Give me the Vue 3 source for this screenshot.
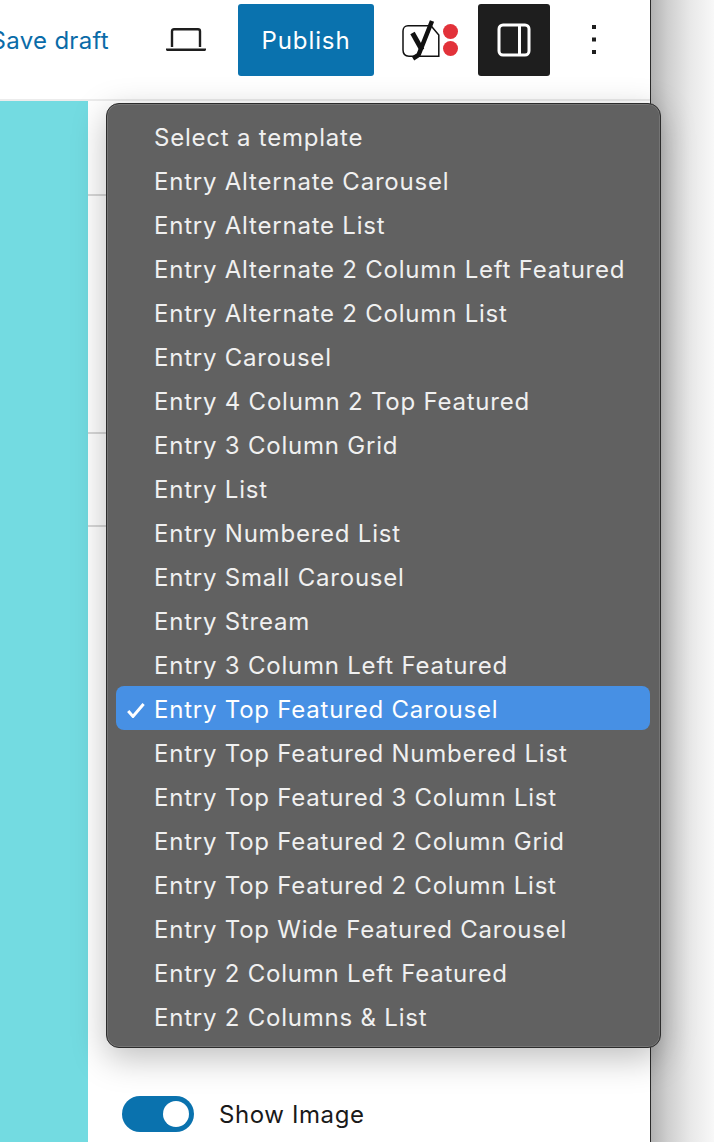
<template>
  <div class="page">
    <div class="window">
      <header class="toolbar">
        <a class="save-draft">Save draft</a>
        <button class="icon-btn preview" aria-label="Preview">
          <svg width="40" height="24" viewBox="0 0 40 24">
            <path d="M6 19V3.2C6 2 7 1.2 8 1.2H32C33 1.2 34 2 34 3.2V19" fill="none" stroke="#1e1e1e" stroke-width="2.4" />
            <path d="M0 20.5H40V21.5C40 22.5 39 23 38 23H2C1 23 0 22.5 0 21.5Z" fill="#1e1e1e" />
          </svg>
        </button>
        <button class="publish">Publish</button>
        <div class="yoast">
          <svg width="38" height="42" viewBox="0 0 38 42">
            <path d="M6 6.8H29L36.8 16V37.2H7C3 37.2 1 35 1 31V12C1 9 3 6.8 6 6.8Z" fill="#fff" stroke="#111" stroke-width="1.5" />
            <path d="M10.5 14L20 31" fill="none" stroke="#111" stroke-width="5" />
            <path d="M30 2L16.5 36L11 39.5" fill="none" stroke="#111" stroke-width="4.5" />
          </svg>
          <div class="dots">
            <span class="red-dot"></span>
            <span class="red-dot"></span>
          </div>
        </div>
        <button class="settings" aria-label="Settings">
          <svg width="34" height="34" viewBox="0 0 34 34">
            <rect x="2" y="2" width="30" height="30" rx="4" fill="none" stroke="#fff" stroke-width="3" />
            <rect x="21" y="3" width="3" height="28" fill="#fff" />
          </svg>
        </button>
        <button class="more" aria-label="Options">
          <svg width="4" height="30" viewBox="0 0 4 30">
            <rect x="0" y="0" width="4" height="4" fill="#1e1e1e" />
            <rect x="0" y="12.5" width="4" height="4" fill="#1e1e1e" />
            <rect x="0" y="25" width="4" height="4" fill="#1e1e1e" />
          </svg>
        </button>
      </header>

      <div class="content">
        <div class="canvas"></div>
        <aside class="sidebar">
          <div class="section first"></div>
          <div class="section second"></div>
          <div class="section third"></div>
          <div class="spacer"></div>
          <label class="toggle-row">
            <span class="toggle"><span class="knob"></span></span>
            <span class="toggle-label">Show Image</span>
          </label>
        </aside>
      </div>
    </div>

    <ul class="menu">
      <li
        v-for="item in templates"
        :key="item"
        class="menu-item"
        :class="{ selected: item === selected }"
      >
        <svg v-if="item === selected" class="check" width="18" height="15" viewBox="0 0 18 15">
          <path d="M1.2 8L6 13.4L16.6 1" fill="none" stroke="#fff" stroke-width="3" />
        </svg>
        {{ item }}
      </li>
    </ul>
  </div>
</template>

<script setup>
const selected = 'Entry Top Featured Carousel'

const templates = [
  'Select a template',
  'Entry Alternate Carousel',
  'Entry Alternate List',
  'Entry Alternate 2 Column Left Featured',
  'Entry Alternate 2 Column List',
  'Entry Carousel',
  'Entry 4 Column 2 Top Featured',
  'Entry 3 Column Grid',
  'Entry List',
  'Entry Numbered List',
  'Entry Small Carousel',
  'Entry Stream',
  'Entry 3 Column Left Featured',
  'Entry Top Featured Carousel',
  'Entry Top Featured Numbered List',
  'Entry Top Featured 3 Column List',
  'Entry Top Featured 2 Column Grid',
  'Entry Top Featured 2 Column List',
  'Entry Top Wide Featured Carousel',
  'Entry 2 Column Left Featured',
  'Entry 2 Columns & List'
]
</script>

<style>
html,
body {
  margin: 0;
  background: #f8f8f8;
}
</style>

<style scoped>
.page {
  position: relative;
  width: 714px;
  height: 1142px;
  overflow: hidden;
  background: linear-gradient(90deg, #b2b2b2 651px, #cfcfcf 668px, #e8e8e8 690px, #f8f8f8 714px);
  font-family: Inter, "Liberation Sans", sans-serif;
}

.window {
  width: 651px;
  height: 1142px;
  box-sizing: border-box;
  display: flex;
  flex-direction: column;
  background: #fff;
  border-right: 1px solid #2a2a2a;
}

.toolbar {
  height: 101px;
  flex: none;
  display: flex;
  align-items: flex-start;
  justify-content: flex-end;
  box-sizing: border-box;
  padding-top: 4px;
  padding-right: 54px;
  background: #fff;
  border-bottom: 2px solid #ececec;
  overflow: hidden;
}

button {
  border: 0;
  padding: 0;
  background: none;
  font: inherit;
}

.save-draft {
  flex: none;
  height: 72px;
  line-height: 74px;
  font-size: 24px;
  letter-spacing: 0.3px;
  color: #0a6ba8;
  white-space: nowrap;
  margin-right: 57px;
}

.icon-btn {
  flex: none;
  height: 72px;
  margin-right: 32px;
  display: flex;
  align-items: center;
}

.publish {
  flex: none;
  width: 136px;
  height: 72px;
  border-radius: 3px;
  background: #0a72ae;
  color: #fff;
  font-size: 24px;
  letter-spacing: 0.9px;
}

.yoast {
  flex: none;
  width: 58px;
  height: 72px;
  margin-left: 28px;
  margin-right: 18px;
  display: flex;
  align-items: center;
}

.dots {
  display: flex;
  flex-direction: column;
  gap: 2px;
  margin-left: 3px;
}

.red-dot {
  width: 15px;
  height: 15px;
  border-radius: 50%;
  background: #e2323a;
}

.settings {
  flex: none;
  width: 72px;
  height: 72px;
  border-radius: 3px;
  background: #1e1e1e;
  display: flex;
  align-items: center;
  justify-content: center;
}

.more {
  flex: none;
  width: 20px;
  height: 72px;
  margin-left: 34px;
  margin-right: -8px;
  display: flex;
  align-items: center;
  justify-content: center;
}

.content {
  flex: 1;
  min-height: 0;
  display: flex;
}

.canvas {
  width: 88px;
  flex: none;
  background: #73dbe1;
}

.sidebar {
  flex: 1;
  display: flex;
  flex-direction: column;
  background: #fff;
}

.section {
  flex: none;
  box-sizing: border-box;
  border-bottom: 2px solid #d8d8d8;
}

.first {
  height: 95px;
}

.second {
  height: 238px;
}

.third {
  height: 93px;
}

.spacer {
  flex: 1;
}

.toggle-row {
  display: flex;
  align-items: center;
  gap: 25px;
  padding-left: 34px;
  margin-bottom: 10px;
}

.toggle {
  width: 72px;
  height: 36px;
  border-radius: 18px;
  background: #0a72ae;
  display: flex;
  align-items: center;
  justify-content: flex-end;
  padding-right: 5px;
  box-sizing: border-box;
}

.knob {
  width: 26px;
  height: 26px;
  border-radius: 50%;
  background: #fff;
}

.toggle-label {
  font-size: 24px;
  letter-spacing: 0.6px;
  color: #1a1a1a;
}

.menu {
  position: absolute;
  left: 106px;
  top: 103px;
  width: 555px;
  height: 945px;
  box-sizing: border-box;
  margin: 0;
  padding: 12px 10px 9px 9px;
  list-style: none;
  background: #616161;
  border: 1px solid #2c2c2c;
  border-radius: 13px;
  box-shadow: inset 0 0 0 1px #757575, 0 10px 34px rgba(0, 0, 0, 0.26);
}

.menu-item {
  position: relative;
  height: 44px;
  line-height: 43px;
  padding-left: 38px;
  border-radius: 8px;
  font-size: 24px;
  letter-spacing: 0.78px;
  color: #f0f0f0;
  white-space: nowrap;
}

.selected {
  top: -2px;
  line-height: 47px;
  background: #4790e4;
  color: #fff;
}

.check {
  position: absolute;
  left: 11px;
  top: 17px;
}
</style>
